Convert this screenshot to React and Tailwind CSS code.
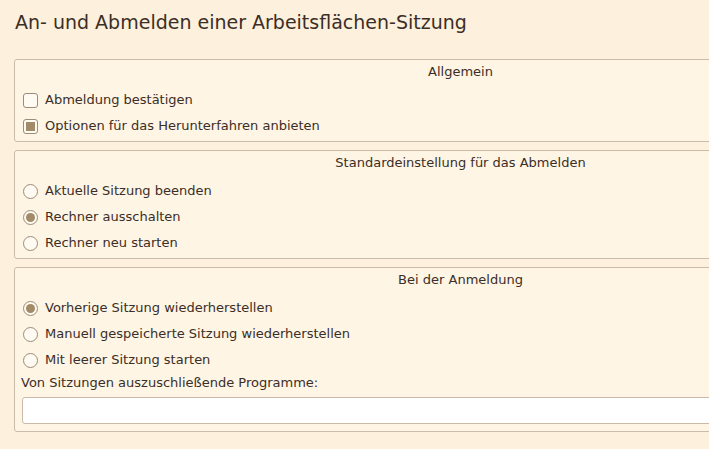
import React from "react";

const Check = ({ checked, label }) => (
  <div className="flex items-center h-[26px] pl-[8px]">
    <span className="w-[15px] h-[15px] rounded-[3px] border border-[#9c8c78] bg-[#fffaf2] flex items-center justify-center">
      {checked && <span className="w-[9px] h-[9px] bg-[#a28b69]" />}
    </span>
    <span className="ml-[7px]">{label}</span>
  </div>
);

const Radio = ({ checked, label }) => (
  <div className="flex items-center h-[26px] pl-[8px]">
    <span className="w-[15px] h-[15px] rounded-full border border-[#9c8c78] bg-[#fffaf2] flex items-center justify-center">
      {checked && <span className="w-[9px] h-[9px] rounded-full bg-[#a28b69]" />}
    </span>
    <span className="ml-[7px]">{label}</span>
  </div>
);

const Frame = ({ title, children, last }) => (
  <div className={"border border-[#cbbca9] rounded-[3px] bg-[#fef5e5] pt-[3px] " + (last ? "pb-[7px]" : "pb-[2px]")}>
    <div className="h-[17px] leading-[17px] text-center">{title}</div>
    <div className="mt-[7px]">{children}</div>
  </div>
);

export default function App() {
  return (
    <div
      className="w-[709px] h-[449px] overflow-hidden bg-[#fdf0dc] text-[#3b2e26] text-[13px]"
      style={{ fontFamily: '"DejaVu Sans", sans-serif' }}
    >
      <div className="w-[893px] ml-[14px]">
        <div className="text-[19px] h-[59px] pt-[9.5px] pl-[1px] leading-[24px]">
          An- und Abmelden einer Arbeitsflächen-Sitzung
        </div>
        <div className="flex flex-col gap-[8px]">
          <Frame title="Allgemein">
            <Check label="Abmeldung bestätigen" />
            <Check checked label="Optionen für das Herunterfahren anbieten" />
          </Frame>
          <Frame title="Standardeinstellung für das Abmelden">
            <Radio label="Aktuelle Sitzung beenden" />
            <Radio checked label="Rechner ausschalten" />
            <Radio label="Rechner neu starten" />
          </Frame>
          <Frame title="Bei der Anmeldung" last>
            <Radio checked label="Vorherige Sitzung wiederherstellen" />
            <Radio label="Manuell gespeicherte Sitzung wiederherstellen" />
            <Radio label="Mit leerer Sitzung starten" />
            <div className="pl-[6px] h-[19px] leading-[19px]">
              Von Sitzungen auszuschließende Programme:
            </div>
            <div className="mx-[7px] mt-[5px] h-[27px] border border-[#c9bba8] rounded-[3px] bg-white" />
          </Frame>
        </div>
      </div>
    </div>
  );
}
